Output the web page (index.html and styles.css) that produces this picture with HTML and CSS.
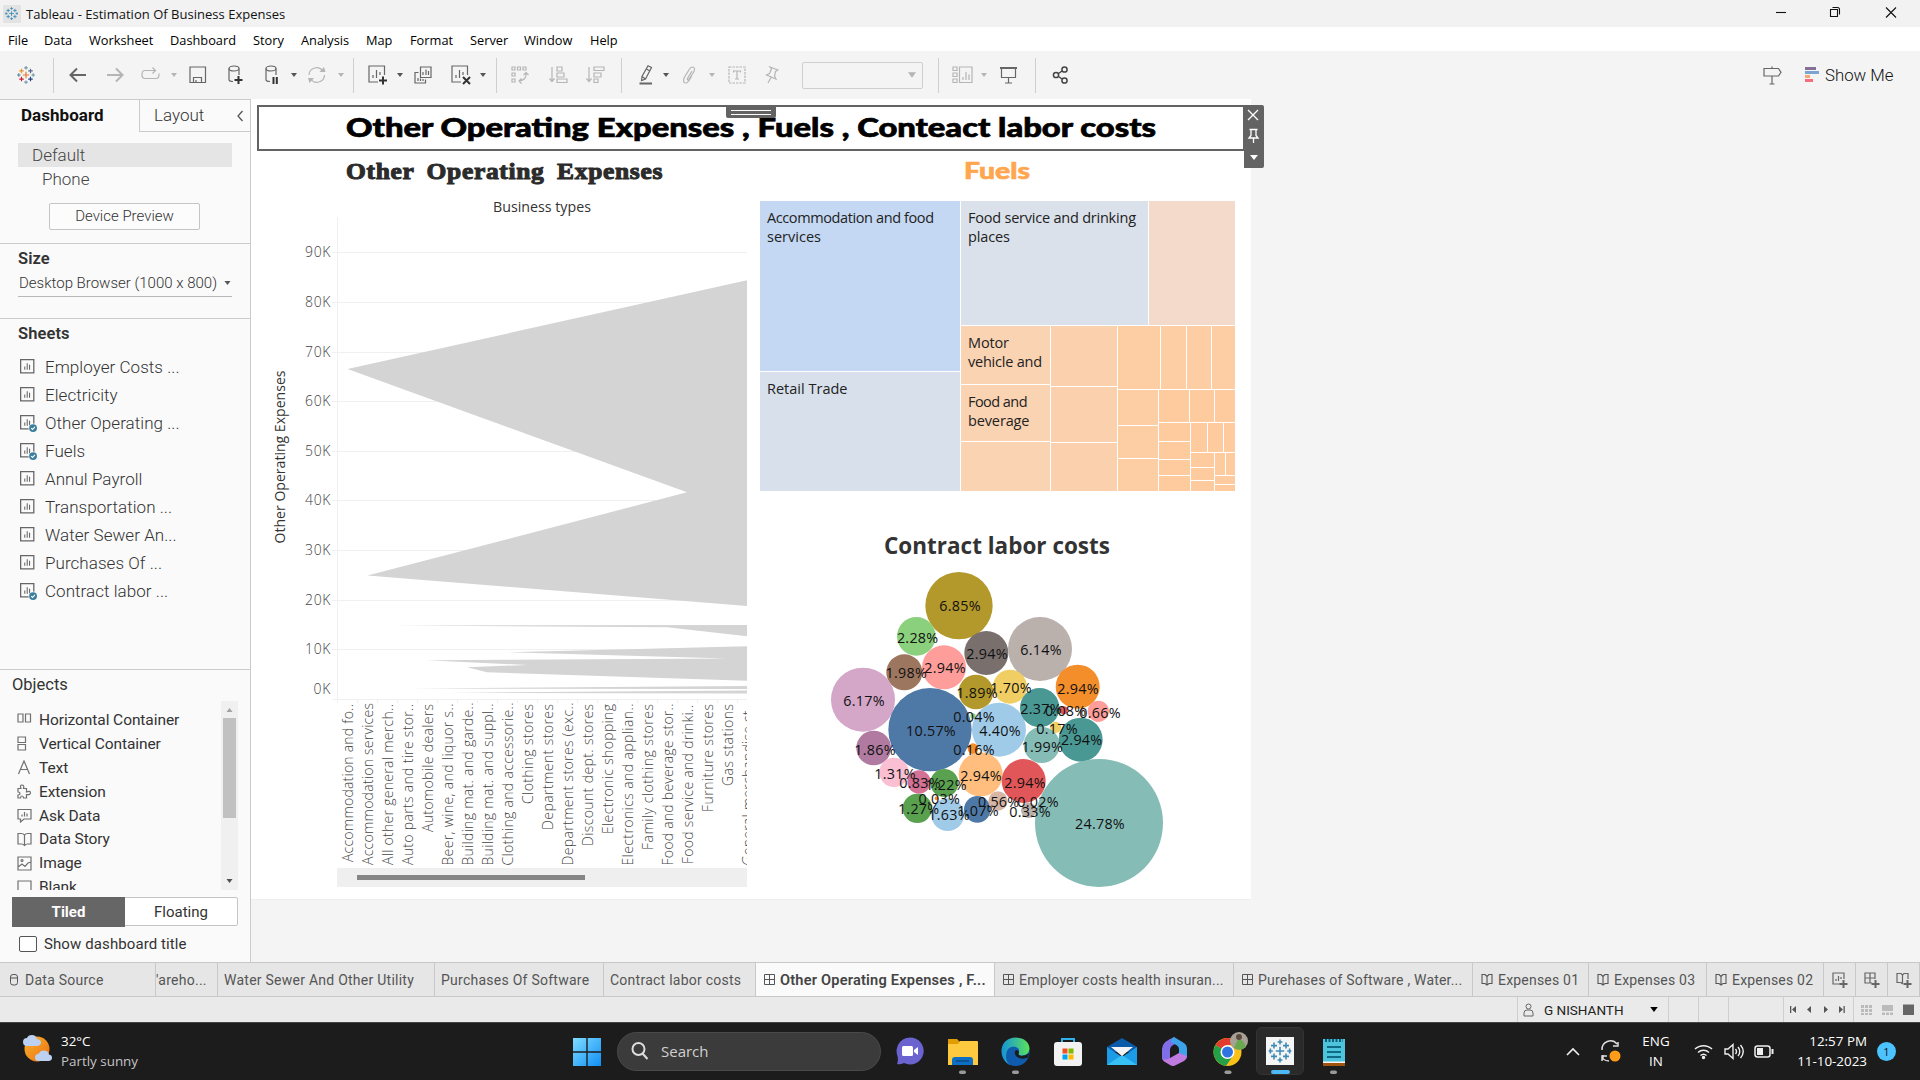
FILE: index.html
```html
<!DOCTYPE html>
<html lang="en">
<head>
<meta charset="utf-8">
<title>Tableau - Estimation Of Business Expenses</title>
<link rel="stylesheet" href="styles.css">
</head>
<body>
<svg class="defs" aria-hidden="true">
  <symbol id="caret" viewBox="0 0 6 4"><path d="M0 0h6L3 4z" fill="currentColor"/></symbol>
  <symbol id="mark" viewBox="0 0 20 20">
    <g fill="none" stroke-width="1.3">
      <path d="M10 6.5v7M6.5 10h7" stroke="#e8762d"/>
      <path d="M5 3v5M2.5 5.5h5" stroke="#eb912c"/><path d="M15 3v5M12.500 5.500h5" stroke="#5c6692"/>
      <path d="M5 12v5M2.500 14.500h5" stroke="#c72035"/><path d="M15 12v5M12.500 14.500h5" stroke="#1f447e"/>
      <path d="M10 0v4M8 2h4" stroke="#7099a6"/><path d="M10 16v4M8 18h4" stroke="#7b9bb5"/>
      <path d="M2 8v4M0 10h4" stroke="#59879b"/><path d="M18 8v4M16 10h4" stroke="#7099a6"/>
    </g>
  </symbol>
  <symbol id="mark-blue" viewBox="0 0 20 20">
    <path d="M10 6.500v7M6.500 10h7M5 3v5M2.500 5.500h5M15 3v5M12.500 5.500h5M5 12v5M2.500 14.500h5M15 12v5M12.500 14.500h5M10 .5v4M8 2.500h4M10 15.500v4M8 17.500h4M2 8v4M.5 10h3.500M18 8v4M16 10h3.500" fill="none" stroke="#3f8bb5" stroke-width="1.300"/>
  </symbol>
  <symbol id="sheet" viewBox="0 0 16 16">
    <path d="M.6.600h12.400v12.400H.6z" fill="none" stroke="#666" stroke-width="1.200"/><path d="M4.500 10V7M6.800 10V4M9 10V5.500" stroke="#666" fill="none"/>
  </symbol>
  <symbol id="used" viewBox="0 0 16 16">
    <path d="M.6.600h12.400v12.400H.6z" fill="none" stroke="#666" stroke-width="1.200"/><path d="M4.500 10V7M6.800 10V4M9 10V5.500" stroke="#666" fill="none"/>
    <circle cx="12.300" cy="12.300" r="4.300" fill="#fafafa"/><circle cx="12.300" cy="12.300" r="3.700" fill="#3b7f9f"/><path d="M10.500 12.300l1.300 1.300 2.300-2.500" fill="none" stroke="#fff"/>
  </symbol>
  <symbol id="dash" viewBox="0 0 11 11"><path d="M.5.500h10v10H.5zM5.500.500v10M.5 5.500h10" fill="none" stroke="#555"/></symbol>
  <symbol id="story" viewBox="0 0 12 13"><path d="M6 3.500L4 1.500H1v9h3L6 12l2-1.500h3v-9H8zV12" fill="none" stroke="#555" stroke-width="1.100"/></symbol>
</svg>

<header class="titlebar">
  <svg width="18" height="18" viewBox="0 0 20 20"><rect width="20" height="20" fill="#e3e3e3"/><use href="#mark-blue" x="2" y="2" width="15" height="15"/></svg>
  <span class="app-name">Tableau - Estimation Of Business Expenses</span>
  <svg class="win-controls" width="140" height="27" viewBox="1770 0 140 27" fill="none" stroke="#111" stroke-width="1.100"><path d="M1776 12.500h10"/><path d="M1830.500 9.500h7v7h-7zM1832.500 7.500h5q2 0 2 2v5"/><path d="M1886 7.500l10 10M1896 7.500l-10 10"/></svg>
</header>

<nav class="menubar"><span>File</span><span>Data</span><span>Worksheet</span><span>Dashboard</span><span>Story</span><span>Analysis</span><span>Map</span><span>Format</span><span>Server</span><span>Window</span><span>Help</span></nav>

<div class="toolbar">
  <svg width="18" height="18"><use href="#mark"/></svg>
  <i class="sep"></i>
  <svg width="18" height="16" viewBox="0 0 18 16" class="ic bold"><path d="M17 8H1.500M8 1.500L1.500 8 8 14.500"/></svg>
  <svg width="18" height="16" viewBox="0 0 18 16" class="ic bold off"><path d="M1 8h15.500M10 1.500L16.500 8 10 14.500"/></svg>
  <svg width="20" height="16" viewBox="0 0 20 16" class="ic off"><path d="M14 3.500H4q-3 0-3 4t3 4h11q3 0 3-4v-1M11.500.500l3 3-3 3"/></svg>
  <svg class="caret off" width="6" height="4"><use href="#caret"/></svg>
  <svg width="18" height="18" viewBox="0 0 18 18" class="ic"><path d="M1 1h15.500v15.500H1zM4.500 16.500v-5h8v5M7 14v2.500"/></svg>
  <svg width="18" height="20" viewBox="0 0 18 20" class="ic"><ellipse cx="7" cy="3.500" rx="5" ry="2.500"/><path d="M2 3.500v11q0 2 4 2M12 3.500V10"/><path d="M11.500 11v8M7.500 15h8" stroke="#333" stroke-width="2"/></svg>
  <svg width="18" height="20" viewBox="0 0 18 20" class="ic"><ellipse cx="7" cy="3.500" rx="5" ry="2.500"/><path d="M2 3.500v11q0 2 4 2M12 3.500V10"/><path d="M9.500 12v7M12.800 12v7" stroke="#333" stroke-width="2"/></svg>
  <svg class="caret" width="6" height="4"><use href="#caret"/></svg>
  <svg width="20" height="18" viewBox="0 0 20 18" class="ic off"><path d="M2 9a7.500 7.500 0 0 1 14-3.500M17.500 9a7.500 7.500 0 0 1-14 3.500"/><path d="M12.500 6h6l-1.500-5zM7 12H1l1.500 5z" fill="#b5b5b5" stroke="none"/></svg>
  <svg class="caret off" width="6" height="4"><use href="#caret"/></svg>
  <i class="sep"></i>
  <svg width="20" height="20" viewBox="0 0 20 20" class="ic"><path d="M10 17H1V1h15.500v9M5 13v-3M8.500 13V5M12 10V7"/><path d="M15 11.500v8M11 15.500h8" stroke="#333" stroke-width="2"/></svg>
  <svg class="caret" width="6" height="4"><use href="#caret"/></svg>
  <svg width="18" height="18" viewBox="0 0 18 18" class="ic"><path d="M6.500 1H17v10.500H6.500zM9 9V6M12 9V3.500M14.500 9V5M4.500 6.500H1V17h10.500v-3.500M4 15v-3M6.500 15v-2.500M9 15v-2"/></svg>
  <svg width="20" height="20" viewBox="0 0 20 20" class="ic"><path d="M10 17H1V1h15.500v9M5 13v-3M8.500 13V5M12 10V7"/><path d="M12 12l7 7M19 12l-7 7" stroke="#333" stroke-width="2"/></svg>
  <svg class="caret" width="6" height="4"><use href="#caret"/></svg>
  <i class="sep"></i>
  <svg width="18" height="18" viewBox="0 0 18 18" class="ic off"><path d="M1 1h3v3H1zM6.500 1h3v3h-3zM12 1h3v3h-3zM1 7h3v3H1zM1 13h3v3H1zM15 7q1 7-7 8M12.500 9L15 6.500 17.500 9M10.500 12.500L8 15l2.500 2.500"/></svg>
  <svg width="19" height="18" viewBox="0 0 19 18" class="ic off"><path d="M3 1v14M.5 12.500L3 15.500l2.500-3M8 1h5v4H8zM8 7h7v4H8zM8 13h10v3.500H8z"/></svg>
  <svg width="19" height="18" viewBox="0 0 19 18" class="ic off"><path d="M3 1v14M.5 12.500L3 15.500l2.500-3M8 1h10v3.500H8zM8 7h7v4H8zM8 13h4v3.500H8z"/></svg>
  <i class="sep"></i>
  <svg width="16" height="20" viewBox="0 0 16 20" class="ic"><path d="M10 .8l3.500 1.700L7.500 14 3.500 15.500 4 11.500zM4 11.500L7.500 14M8.500 4L12 6"/><path d="M1.500 18.500H14" stroke-width="2"/></svg>
  <svg class="caret" width="6" height="4"><use href="#caret"/></svg>
  <svg width="16" height="18" viewBox="0 0 16 18" class="ic off"><path d="M10 5L5.500 12.500q-.5 2 1 1.500L12 5.500Q13.500 1 10.500 1 9 1 7.500 3L2 12q-1.500 5 2 5 1.500 0 3-2.500l2.500-4"/></svg>
  <svg class="caret off" width="6" height="4"><use href="#caret"/></svg>
  <svg width="18" height="18" viewBox="0 0 18 18" class="ic off"><path d="M1 1h16v16H1z" stroke-dasharray="2.500 1"/><path d="M5.500 6.500V5h7v1.500M9 5v8M7 13h4"/></svg>
  <svg width="14" height="18" viewBox="0 0 14 18" class="ic off"><path d="M5 1l8 3-2.500 1.500-1 4.500 1.500 3-9.500-4 3-1.500 2-4.500zM6 11.500L3 17"/></svg>
  <span class="select"><svg class="caret off" width="8" height="6"><use href="#caret"/></svg></span>
  <i class="sep"></i>
  <svg width="21" height="18" viewBox="0 0 21 18" class="ic off"><path d="M1 1h4v3.500H1zM1 7h4v3.500H1zM1 13h4v3.500H1zM7.500 1H20v15.500H7.500zM11 14v-3M14 14V6M17 14V8.500"/></svg>
  <svg class="caret off" width="6" height="4"><use href="#caret"/></svg>
  <svg width="19" height="18" viewBox="0 0 19 18" class="ic"><path d="M1 2h17" stroke-width="2"/><path d="M2.500 2v9.500h14V2M9.500 11.500V17M6 17h7"/></svg>
  <i class="sep"></i>
  <svg width="17" height="18" viewBox="0 0 17 18" class="ic dark"><circle cx="4" cy="9" r="2.600"/><circle cx="12.500" cy="3.500" r="2.600"/><circle cx="12.500" cy="14.500" r="2.600"/><path d="M6.500 7.500L10 5M6.500 10.500L10 13"/></svg>
  <svg width="19" height="19" viewBox="0 0 19 19" class="ic"><path d="M9 .5v2M9 10v8M6.500 18h5M1 2.500h14.500L18 6.300 15.500 10H1z"/></svg>
  <svg width="15" height="16" viewBox="0 0 15 16"><path d="M1 0h11v3H1z" fill="#86709a"/><path d="M1 4h14v3H1z" fill="#7ba4d0"/><path d="M1 8h5v3H1z" fill="#f5a77a"/><path d="M1 12h8v3H1z" fill="#f76d7d"/></svg>
  <span class="showme">Show Me</span>
</div>

<main class="workspace">
  <aside class="sidebar">
    <div class="side-tabs"><b>Dashboard</b><span>Layout<svg width="8" height="12" viewBox="0 0 8 12" fill="none" stroke="#555" stroke-width="1.300"><path d="M6.500 1L2 6l4.500 5"/></svg></span></div>
    <section class="devices">
      <div class="device on">Default</div>
      <div class="device phone">Phone</div>
      <div class="preview">Device Preview</div>
    </section>
    <section class="size">
      <h2>Size</h2>
      <div class="size-pick"><span>Desktop Browser (1000 x 800)</span><svg class="caret" width="7" height="4"><use href="#caret"/></svg></div>
    </section>
    <section class="sheets">
      <h2>Sheets</h2>
      <ul>
        <li><svg><use href="#sheet"/></svg>Employer Costs ...</li>
        <li><svg><use href="#sheet"/></svg>Electricity</li>
        <li><svg><use href="#used"/></svg>Other Operating ...</li>
        <li><svg><use href="#used"/></svg>Fuels</li>
        <li><svg><use href="#sheet"/></svg>Annul Payroll</li>
        <li><svg><use href="#sheet"/></svg>Transportation ...</li>
        <li><svg><use href="#sheet"/></svg>Water Sewer An...</li>
        <li><svg><use href="#sheet"/></svg>Purchases Of ...</li>
        <li><svg><use href="#used"/></svg>Contract labor ...</li>
      </ul>
    </section>
    <section class="objects">
      <h3>Objects</h3>
      <div class="scroller">
        <ul>
          <li><svg viewBox="0 0 15 15"><path d="M1 2h5v8H1zM8.500 2h5v8h-5z"/></svg>Horizontal Container</li>
          <li><svg viewBox="0 0 15 15"><path d="M1 1h7.500v5.500H1zM1 8.500h7.500V14H1z"/></svg>Vertical Container</li>
          <li><svg viewBox="0 0 15 15"><path d="M1.500 14L7 1l5.500 13M3.700 9.500h6.600"/></svg>Text</li>
          <li><svg viewBox="0 0 15 15"><path d="M1 4.500h3Q2.500 1 5 1t1.500 3.500h3V8q4-1.500 4 .8T9.500 10.500V14H6.500q0-2-1.500-2t-1.500 2H1v-3q2 0 2-1.500T1 8z"/></svg>Extension</li>
          <li><svg viewBox="0 0 15 15"><path d="M1 1.500h13V11H7l-3.500 3V11H1zM5 8.500v-2M7.500 8.500V4M10 8.500V5.500"/></svg>Ask Data</li>
          <li><svg viewBox="0 0 15 15"><path d="M7.500 3Q6 1.500 4.500 1.500H1V12h3.500q1.500 0 3 1.500 1.500-1.500 3-1.500H14V1.500h-3.500Q9 1.500 7.500 3zV13.500"/></svg>Data Story</li>
          <li><svg viewBox="0 0 15 15"><path d="M1 1h13v13H1zM1 11l4-3 3 2.500L11 7l3-1"/><circle cx="5" cy="4.500" r="1"/></svg>Image</li>
          <li><svg viewBox="0 0 15 15"><path d="M1 1h13v13H1z"/></svg>Blank</li>
        </ul>
        <div class="scrollbar"><svg class="up" width="7" height="4"><use href="#caret"/></svg><i></i><svg class="down" width="7" height="4"><use href="#caret"/></svg></div>
      </div>
      <div class="mode"><b>Tiled</b><span>Floating</span></div>
      <label class="show-title"><i></i>Show dashboard title</label>
    </section>
  </aside>

  <div class="stage">
    <div class="dashboard">
      <div class="dash-title">
        <svg width="982" height="42" viewBox="259 107 982 42"><text x="346" y="137" textLength="810" lengthAdjust="spacingAndGlyphs" class="t-main">Other Operating Expenses , Fuels , Conteact labor costs</text></svg>
        <div class="handle"></div>
        <svg class="tools" width="21" height="63" viewBox="0 0 21 63"><path d="M0 0h19q2 0 2 2v59q0 2-2 2H1V46H0z" fill="#636363"/><path d="M5 5l10 10M15 5L5 15M6.500 24.500h8M8 24.500v6l-2 2.500h9l-2-2.500v-6M10.500 33v5" fill="none" stroke="#fff" stroke-width="1.300"/><path d="M7 50h8l-4 5z" fill="#fff"/></svg>
      </div>
      <div class="columns">
        <svg width="502" height="742" viewBox="251 151 502 742">
          <text x="346" y="179" textLength="317" lengthAdjust="spacingAndGlyphs" class="t-serif">Other Operating Expenses</text>
          <g class="ink"><text x="493" y="212" textLength="98" lengthAdjust="spacingAndGlyphs">Business types</text>
          <text transform="translate(285 543.500) rotate(-90)" textLength="173" lengthAdjust="spacingAndGlyphs">Other Operating Expenses</text></g>
          <path d="M337.500 217v482M332 252.500h415M332 302.500h415M332 352.500h415M332 401.500h415M332 451.500h415M332 500.500h415M332 550.500h415M332 600.500h415M332 649.500h415M332 699.500h415M337.500 699v4M357.500 699v4M377.500 699v4M397.500 699v4M417.500 699v4M437.500 699v4M457.500 699v4M477.500 699v4M497.500 699v4M517.500 699v4M537.500 699v4M557.500 699v4M577.500 699v4M597.500 699v4M617.500 699v4M637.500 699v4M657.500 699v4M677.500 699v4M697.500 699v4M717.500 699v4M737.500 699v4" stroke="#f0f0f0" fill="none"/>
          <g fill="#d4d4d4">
            <path d="M347.500 369L747 280.200V606L367.500 575.500 687 492.300z"/>
            <path d="M391 625.500L747 625v11.200L667 627.200z"/>
            <path d="M508 652.300L747 646.200v34.500L487 672.200l-20-5 60-2.200-100-4.800L727 658.600z"/>
            <path d="M410 688.600L747 686v3zM450 692.800L747 690.500v3z"/>
          </g>
          <g class="axis">
            <text x="305" y="257" textLength="25.500">90K</text><text x="305" y="307" textLength="25.500">80K</text><text x="305" y="357" textLength="25.500">70K</text><text x="305" y="406" textLength="25.500">60K</text><text x="305" y="456" textLength="25.500">50K</text><text x="305" y="505" textLength="25.500">40K</text><text x="305" y="555" textLength="25.500">30K</text><text x="305" y="605" textLength="25.500">20K</text><text x="305" y="654" textLength="25.500">10K</text><text x="313.500" y="694" textLength="17">0K</text>
          </g>
          <svg x="337" y="700" width="410" height="168" viewBox="337 700 410 168" class="axis">
            <g transform="translate(352.500 862) rotate(-90)"><text textLength="158">Accommodation and fo..</text></g>
            <g transform="translate(372.500 865) rotate(-90)"><text textLength="162">Accommodation services</text></g>
            <g transform="translate(392.500 865) rotate(-90)"><text textLength="161">All other general merch..</text></g>
            <g transform="translate(412.500 865) rotate(-90)"><text textLength="161">Auto parts and tire stor..</text></g>
            <g transform="translate(432.500 832) rotate(-90)"><text textLength="128">Automobile dealers</text></g>
            <g transform="translate(452.500 865.500) rotate(-90)"><text textLength="162">Beer, wine, and liquor s..</text></g>
            <g transform="translate(472.500 865.500) rotate(-90)"><text textLength="163">Building mat. and garde..</text></g>
            <g transform="translate(492.500 865.500) rotate(-90)"><text textLength="162">Building mat. and suppl..</text></g>
            <g transform="translate(512.500 865.500) rotate(-90)"><text textLength="163">Clothing and accessorie..</text></g>
            <g transform="translate(532.500 804) rotate(-90)"><text textLength="100">Clothing stores</text></g>
            <g transform="translate(552.500 830) rotate(-90)"><text textLength="126">Department stores</text></g>
            <g transform="translate(572.500 865.500) rotate(-90)"><text textLength="163">Department stores (exc..</text></g>
            <g transform="translate(592.500 846) rotate(-90)"><text textLength="142">Discount dept. stores</text></g>
            <g transform="translate(612.500 834) rotate(-90)"><text textLength="130">Electronic shopping</text></g>
            <g transform="translate(632.500 865.500) rotate(-90)"><text textLength="162">Electronics and applian..</text></g>
            <g transform="translate(652.500 850) rotate(-90)"><text textLength="146">Family clothing stores</text></g>
            <g transform="translate(672.500 865.500) rotate(-90)"><text textLength="162">Food and beverage stor..</text></g>
            <g transform="translate(692.500 864) rotate(-90)"><text textLength="159">Food service and drinki..</text></g>
            <g transform="translate(712.500 812) rotate(-90)"><text textLength="108">Furniture stores</text></g>
            <g transform="translate(732.500 786) rotate(-90)"><text textLength="82">Gas stations</text></g>
            <g transform="translate(752.500 865.500) rotate(-90)"><text textLength="162">General merchandise st..</text></g>
          </svg>
          <path d="M337 868h410v19H337z" fill="#efefef"/><path d="M357 875h228v5H357z" fill="#858585"/>
        </svg>
        <div class="right-col">
          <svg width="498" height="350" viewBox="753 151 498 350">
            <text x="964" y="179" textLength="66" lengthAdjust="spacingAndGlyphs" class="t-fuels">Fuels</text>
            <path fill="#c4d8f3" d="M760 201h200v170H760z"/><path fill="#d8e0eb" d="M760 372h200v119H760z"/><path fill="#dae1ea" d="M961 201h187v124H961z"/><path fill="#f3dacb" d="M1149 201h86v124h-86z"/>
            <path fill="#fad3b3" d="M961 326h89v58h-89zM961 385h89v56h-89zM961 442h89v49h-89z"/>
            <path fill="#fbd0ac" d="M1051 326h66v60h-66zM1051 387h66v55h-66zM1051 443h66v48h-66z"/>
            <path fill="#fdcda4" d="M1118 326h42v63h-42zM1161 326h25v63h-25zM1187 326h24v63h-24zM1212 326h23v63h-23zM1118 390h40v35h-40zM1118 426h40v32h-40zM1118 459h40v32h-40z"/>
            <path fill="#fecb9e" d="M1159 390h30v32h-30zM1190 390h24v32h-24zM1215 390h20v32h-20zM1159 423h31v18h-31zM1159 442h31v17h-31zM1159 460h31v15h-31zM1159 476h31v15h-31zM1191 423h16v29h-16zM1208 423h15v29h-15zM1224 423h11v29h-11zM1191 453h23v14h-23zM1191 468h23v12h-23zM1191 481h23v10h-23zM1215 453h10v22h-10zM1226 453h9v22h-9zM1215 476h20v8h-20zM1215 485h20v6h-20z"/>
            <g class="tree">
              <text x="767" y="223" textLength="167">Accommodation and food</text><text x="767" y="242" textLength="54">services</text>
              <text x="767" y="394" textLength="80.500">Retail Trade</text>
              <text x="968" y="223" textLength="168">Food service and drinking</text><text x="968" y="242" textLength="42">places</text>
              <text x="968" y="348" textLength="41">Motor</text><text x="968" y="367" textLength="74">vehicle and</text>
              <text x="968" y="407" textLength="59.500">Food and</text><text x="968" y="426" textLength="61.500">beverage</text>
            </g>
          </svg>
          <svg width="498" height="392" viewBox="753 501 498 392">
            <text x="884" y="553.500" textLength="226" lengthAdjust="spacingAndGlyphs" class="t-contract">Contract labor costs</text>
            <g transform="translate(800 520) scale(.33333)">
              <circle cx="477" cy="257" r="101" fill="#b3982b"/><circle cx="349" cy="349" r="58" fill="#8bd17d"/><circle cx="559" cy="399" r="66" fill="#79706e"/><circle cx="720" cy="387" r="96" fill="#bab0ac"/><circle cx="313" cy="457" r="54" fill="#9d7660"/><circle cx="432" cy="442" r="66" fill="#ff9d9a"/><circle cx="528" cy="516" r="52" fill="#b3982b"/><circle cx="630" cy="500" r="51" fill="#f1ce63"/><circle cx="833" cy="500" r="66" fill="#f48e2b"/><circle cx="189" cy="539" r="96" fill="#d4a6c8"/><circle cx="390" cy="629" r="125" fill="#4e79a7"/><circle cx="519" cy="588" r="8" fill="#8bd17d"/><circle cx="597" cy="629" r="81" fill="#a0cbe8"/><circle cx="719" cy="563" r="59" fill="#499894"/><circle cx="791" cy="571" r="12" fill="#e15759"/><circle cx="895" cy="574" r="32" fill="#ff9d9a"/><circle cx="767" cy="622" r="17" fill="#f1ce63"/><circle cx="725" cy="675" r="54" fill="#86bcb6"/><circle cx="842" cy="659" r="66" fill="#499894"/><circle cx="221" cy="684" r="52" fill="#b07aa1"/><circle cx="519" cy="686" r="16" fill="#f28e2b"/><circle cx="542" cy="763" r="66" fill="#ffbe7d"/><circle cx="282" cy="757" r="44" fill="#fabfd2"/><circle cx="357" cy="786" r="35" fill="#d37295"/><circle cx="433" cy="789" r="42" fill="#59a14f"/><circle cx="671" cy="783" r="66" fill="#e15759"/><circle cx="897" cy="909" r="192" fill="#86bcb6"/><circle cx="410" cy="835" r="6" fill="#f28e2b"/><circle cx="352" cy="865" r="44" fill="#59a14f"/><circle cx="443" cy="884" r="49" fill="#a0cbe8"/><circle cx="532" cy="868" r="40" fill="#4e79a7"/><circle cx="594" cy="843" r="29" fill="#d7b5a6"/><circle cx="686" cy="871" r="23" fill="#bab0ac"/>
              <g class="pct">
                <text x="480" y="274">6.85%</text><text x="353" y="370">2.28%</text><text x="561" y="418">2.94%</text><text x="723" y="406">6.14%</text><text x="319" y="475">1.98%</text><text x="435" y="460">2.94%</text><text x="531" y="535">1.89%</text><text x="633" y="519">1.70%</text><text x="834" y="523">2.94%</text><text x="192" y="559">6.17%</text><text x="393" y="649">10.57%</text><text x="522" y="606">0.04%</text><text x="600" y="649">4.40%</text><text x="723" y="583">2.37%</text><text x="797" y="589">0.08%</text><text x="900" y="595">0.66%</text><text x="771" y="643">0.17%</text><text x="727" y="697">1.99%</text><text x="845" y="676">2.94%</text><text x="225" y="704">1.86%</text><text x="522" y="706">0.16%</text><text x="543" y="784">2.94%</text><text x="285" y="778">1.31%</text><text x="360" y="805">0.83%</text><text x="438" y="811">1.22%</text><text x="675" y="805">2.94%</text><text x="900" y="928">24.78%</text><text x="418" y="852">0.03%</text><text x="356" y="883">1.27%</text><text x="447" y="901">1.63%</text><text x="534" y="889">1.07%</text><text x="596" y="862">0.56%</text><text x="714" y="862">0.02%</text><text x="690" y="892">0.33%</text>
              </g>
            </g>
          </svg>
        </div>
      </div>
    </div>
  </div>
</main>

<div class="sheet-tabs">
  <span><svg width="9" height="12" viewBox="0 0 9 12" fill="none" stroke="#555"><rect x=".5" y=".5" width="7" height="10.500" rx="2.500"/><path d="M.5 4h7"/></svg><em class="ds">Data Source</em></span>
  <span class="cut"><em>'areho...</em></span>
  <span><em>Water Sewer And Other Utility</em></span>
  <span><em>Purchases Of Software</em></span>
  <span><em>Contract labor costs</em></span>
  <span class="active"><svg width="11" height="11"><use href="#dash"/></svg><em>Other Operating Expenses , F...</em></span>
  <span class="dt"><svg width="11" height="11"><use href="#dash"/></svg><em>Employer costs health insuran...</em></span>
  <span class="dt"><svg width="11" height="11"><use href="#dash"/></svg><em>Purehases of Software , Water...</em></span>
  <span class="dt"><svg width="12" height="13"><use href="#story"/></svg><em>Expenses 01</em></span>
  <span class="dt"><svg width="12" height="13"><use href="#story"/></svg><em>Expenses 03</em></span>
  <span class="dt"><svg width="12" height="13"><use href="#story"/></svg><em>Expenses 02</em></span>
  <span class="new"><svg width="16" height="16" viewBox="0 0 16 16" class="ic"><path d="M8 12H1V1h11v6M4 9V7M6.500 9V4M9 7V5"/><path d="M11.500 8v8M7.500 12h8" stroke-width="2"/></svg></span>
  <span class="new"><svg width="16" height="16" viewBox="0 0 16 16" class="ic"><path d="M8 11H1V1h10v6M6 1v10M1 6h10"/><path d="M11.500 8v8M7.500 12h8" stroke-width="2"/></svg></span>
  <span class="new"><svg width="16" height="16" viewBox="0 0 16 16" class="ic"><path d="M6.500 12L5 10.500H1v-9h4L6.500 3 8 1.500h4V7M6.500 3v9"/><path d="M11.500 8v8M7.500 12h8" stroke-width="2"/></svg></span>
</div>

<div class="statusbar">
  <span class="user"><svg width="11" height="14" viewBox="0 0 11 14" fill="none" stroke="#666"><circle cx="5.500" cy="3.500" r="2.500"/><path d="M1 13V10q0-3 3-3h3q3 0 3 3v3z"/></svg>G NISHANTH<svg class="drop" width="8" height="5"><use href="#caret"/></svg></span>
  <span></span><span></span><span></span>
  <span class="pager"><svg width="60" height="9" viewBox="0 0 60 9" fill="#555"><path d="M2 1h1.300v7H2zM8 1v7L4 4.500zM23 1v7l-4-3.500zM36 1v7l4-3.500zM51 1v7l4-3.500zM55.500 1h1.300v7h-1.300z"/></svg></span>
  <span class="views"><svg width="56" height="12" viewBox="0 0 56 12"><path fill="#bbb" d="M0 1h3v3H0zM4 1h3v3H4zM8 1h3v3H8zM0 5h3v3H0zM4 5h3v3H4zM8 5h3v3H8zM0 9h3v2H0zM4 9h3v2H4zM8 9h3v2H8zM21 1h11v6H21zM21 8.500h3V11h-3zM25 8.500h3V11h-3zM29 8.500h3V11h-3z"/><path fill="#666" d="M42 .500h11V11H42z"/></svg></span>
</div>

<footer class="taskbar">
  <svg width="32" height="58" viewBox="0 0 32 58"><defs><linearGradient id="sun" x2="1" y2="1"><stop stop-color="#f7b52e"/><stop offset="1" stop-color="#ee6e12"/></linearGradient></defs><circle cx="15" cy="27" r="12.500" fill="url(#sun)"/><path d="M5 24q-4 0-4-4t4-4q1-3 5-3t5 4q4 .5 4 3.500T15 24z" fill="#bcd0f2"/><path d="M17 39q-4 0-4-3.500t4-4q1-3 5-3t5 4q3 .5 3 3.200T27 39z" fill="#bcd0f2"/></svg>
  <div class="weather"><span>32°C</span><span>Partly sunny</span></div>
  <svg width="28" height="58" viewBox="0 0 28 58"><defs><linearGradient id="win" x2="1" y2="1"><stop stop-color="#7fdcff"/><stop offset="1" stop-color="#0f8ff5"/></linearGradient></defs><path fill="url(#win)" d="M0 16h13.300v13.300H0zM14.700 16H28v13.300H14.700zM0 30.700h13.300V44H0zM14.700 30.700H28V44H14.700z"/></svg>
  <div class="search"><svg width="18" height="20" viewBox="0 0 18 20" fill="none" stroke="#ddd" stroke-width="2"><circle cx="7.500" cy="8" r="6"/><path d="M11.500 12.500l5 5.500"/></svg>Search</div>
  <svg width="28" height="58" viewBox="0 0 28 58"><path d="M14 15.500A13.500 13.500 0 1 1 8 41q-4 2-7 1 1.500-3 .5-8A13.500 13.500 0 0 1 14 15.500z" fill="#6b63cf"/><rect x="6" y="24" width="11" height="10" rx="1.500" fill="#fff"/><path d="M18 28l4-3v8l-4-3z" fill="#fff"/></svg>
  <svg width="32" height="58" viewBox="0 0 32 58"><path d="M1 17h9l3 3-3 4H1z" fill="#e09c00"/><path d="M1 22h10l2-3h17q1 0 1 1v23H1z" fill="#fdc93f"/><path d="M5 43v-5q0-3 3-3h15q3 0 3 3v5z" fill="#0c6fc4"/><path d="M9 39h13" stroke="#084a87" stroke-width="1.500"/><rect x="12" y="48.500" width="7" height="3.500" rx="1.700" fill="#999"/></svg>
  <svg width="32" height="58" viewBox="0 0 32 58"><defs><linearGradient id="edge" x2="1"><stop stop-color="#1593d8"/><stop offset="1" stop-color="#5be35b"/></linearGradient></defs><circle cx="15.500" cy="30" r="14" fill="#0f5cae"/><path d="M1.500 28Q3 16 16 15.500 29 16.500 29.500 27q-1 6.500-8 6.500-4-.5-2.500-3 1-5-5-6-8 0-8 10 0 5 4 9Q1.500 38 1.500 28z" fill="url(#edge)"/><path d="M19 30.500q-2 3 3 3.500 4 0 7-3-.5 3-1 4.500-6 2.500-11-.5-4-4-1-7 3 .5 3 2.500z" fill="#1c1c1c"/><rect x="12" y="48.500" width="7" height="3.500" rx="1.700" fill="#999"/></svg>
  <svg width="28" height="58" viewBox="0 0 28 58"><path d="M8 21v-4h12v4" fill="none" stroke="#2fb2ec" stroke-width="2"/><rect y="20" width="28" height="24" rx="3" fill="#f2f2f2"/><path fill="#f25022" d="M8.500 26.500h5v5h-5z"/><path fill="#7fba00" d="M14.500 26.500h5v5h-5z"/><path fill="#00a4ef" d="M8.500 32.500h5v5h-5z"/><path fill="#ffb900" d="M14.500 32.500h5v5h-5z"/></svg>
  <svg width="30" height="58" viewBox="0 0 30 58"><path d="M0 25l15-9 15 9v5H0z" fill="#0a5ba8"/><path d="M0 25l15 10 15-10v18H0z" fill="#1c9be6"/><path d="M0 43l15-10 15 10z" fill="#38c0f5"/><path d="M4 25h22l-11 9z" fill="#f4f4f4"/></svg>
  <svg width="28" height="58" viewBox="0 0 28 58"><path d="M15 15Q2 19 2 27v10l8 5V28q0-4 5-6z" fill="#7f6ee8"/><path d="M14 15l10 6q3 2 3 6v9l-8-4v-5q0-2-2-3.500L11 20q0-4 3-5z" fill="#3da3e8"/><path d="M2 36q2 3 8 0l9-5 8 3q0 3-3 5l-8 4q-3 2-6 0l-5-3q-2-1-3-4z" fill="#c07be0"/></svg>
  <svg class="chrome" width="38" height="58" viewBox="0 0 38 58"><circle cx="15.500" cy="30" r="14" fill="#fbc116"/><path d="M15.500 30L3.400 23A14 14 0 0 1 27.600 23H15.500z" fill="#e33b2e"/><path d="M3.400 23A14 14 0 0 0 14 43.900L21.500 33 15.500 30z" fill="#24a148"/><circle cx="15.500" cy="30" r="7" fill="#fff"/><circle cx="15.500" cy="30" r="5.500" fill="#2f74e0"/><circle cx="27" cy="19" r="9" fill="#a7a196"/><path d="M22 26l4-9 5 2 3 6q-6 5-12 1z" fill="#6aa84f"/><circle cx="27" cy="15" r="3" fill="#5a4a40"/><rect x="12.500" y="48.500" width="7" height="3.500" rx="1.700" fill="#999"/></svg>
  <svg width="48" height="58" viewBox="0 0 48 58"><rect x=".5" y="5.500" width="47" height="47" rx="5" fill="#2a2a2a" stroke="#333"/><path d="M10 15h28v28H10z" fill="#f5f5f5"/><use href="#mark-blue" x="12" y="17" width="24" height="24"/><rect x="15" y="48" width="19" height="4" rx="2" fill="#4cb8f5"/></svg>
  <svg width="24" height="58" viewBox="0 0 24 58"><path d="M1 17h22v26H1z" fill="#4ec4dc"/><path d="M1 41h22v3H1z" fill="#a1520f"/><path d="M1 39.500h22V41H1z" fill="#f4f4f4"/><path d="M3 18.500h18" stroke="#0f5f78" stroke-width="3" stroke-dasharray="2 1.500"/><path d="M5 25h14M5 30h14M5 35h14" stroke="#0e6b85" stroke-width="2"/><rect x="8" y="48.500" width="7" height="3.500" rx="1.700" fill="#999"/></svg>
  <svg width="14" height="58" viewBox="0 0 14 58"><path d="M1 33l6-6 6 6" fill="none" stroke="#eee" stroke-width="1.600"/></svg>
  <svg width="24" height="58" viewBox="0 0 24 58"><path d="M2 28a8.500 8.500 0 0 1 15-6M18 20v4h-5M3 37v-4M3 37q3 2 6 2M2 39v-5h5" fill="none" stroke="#ddd" stroke-width="1.500"/><circle cx="15" cy="34" r="5.500" fill="#ff9c1a"/></svg>
  <div class="lang"><span>ENG</span><span>IN</span></div>
  <svg width="20" height="58" viewBox="0 0 20 58" fill="none" stroke="#eee" stroke-width="1.500"><path d="M1 27a12.500 12.500 0 0 1 17 0M4 30.500a8 8 0 0 1 11 0M6.500 33.500a4.500 4.500 0 0 1 6 0"/><circle cx="9.500" cy="35.500" r="1" fill="#eee"/></svg>
  <svg width="22" height="58" viewBox="0 0 22 58" fill="none" stroke="#eee" stroke-width="1.400"><path d="M1 27h3l5-4.500v14L4 32H1zM11.500 27q2 2.500 0 5M14 25q3.500 4.500 0 9M16.500 23q5.500 6.500 0 13"/></svg>
  <svg width="20" height="58" viewBox="0 0 20 58"><rect x="1" y="24" width="15" height="11" rx="2.500" fill="none" stroke="#eee" stroke-width="1.500"/><path d="M3 26h6v7H3zM17.500 27h2v5h-2z" fill="#eee"/></svg>
  <div class="clock"><span>12:57 PM</span><span>11-10-2023</span></div>
  <div class="badge">1</div>
</footer>
</body>
</html>
```
FILE: styles.css
```css
* { box-sizing: border-box; }
body { margin: 0; width: 1920px; height: 1080px; overflow: hidden; background: #f4f4f4; display: flex; flex-direction: column; font-family: Roboto, "Liberation Sans", sans-serif; color: #333; }
svg { display: block; flex: none; }
ul { list-style: none; margin: 0; padding: 0; }
h2, h3 { margin: 0; }
.defs { display: none; }

.titlebar { height: 27px; background: #f2f2f2; display: flex; align-items: center; padding-left: 3px; font: 13px/27px "Open Sans", sans-serif; color: #111; }
.app-name { margin-left: 5px; padding-top: 1px; letter-spacing: .02px; }
.win-controls { margin-left: auto; margin-right: 10px; }

.menubar { height: 24px; background: #fff; display: grid; grid-template-columns: 36px 45px 81px 83px 48px 65px 44px 60px 54px 66px auto; padding-left: 8px; font: 12.800px/27px "Open Sans", sans-serif; color: #000; white-space: nowrap; }

.toolbar { height: 48px; background: #f4f4f4; display: grid; align-items: center; justify-items: start; padding-left: 17px; color: #555;
  grid-template-columns: 36px 16px 37px 35px 30px 18px 38px 37px 27px 16px 31px 15px 15px 29px 17px 37px 29px 16px 15px 38px 37px 35px 17px 25px 19px 27px 19px 37px 37px 136px 14px 29px 18px 36px 17px 711px 41px 21px auto; }
.sep { width: 1px; height: 35px; background: #cfcfcf; }
.ic { fill: none; stroke: #666; stroke-width: 1.200; }
.ic.bold { stroke-width: 2; }
.ic.dark { stroke: #444; stroke-width: 1.500; }
.ic.off { stroke: #b5b5b5; }
.caret { color: #555; }
.caret.off { color: #b5b5b5; }
.select { width: 121px; height: 27px; border: 1px solid #cfcfcf; border-radius: 2px; display: flex; align-items: center; justify-content: flex-end; padding-right: 6px; }
.showme { font-size: 16.800px; color: #111; white-space: nowrap; font-weight: 300; }

.workspace { height: 863px; display: flex; }
.sidebar { width: 251px; background: #fafafa; border-right: 1px solid #cbcbcb; border-top: 1px solid #cbcbcb; display: flex; flex-direction: column; font-weight: 300; }
.side-tabs { display: grid; grid-template-columns: 139px 1fr; height: 31px; font-size: 17px; line-height: 31px; }
.side-tabs b { padding-left: 21px; color: #111; font-weight: 700; letter-spacing: .05px; }
.side-tabs span { border-left: 1px solid #cbcbcb; border-bottom: 1px solid #cbcbcb; padding: 0 6px 0 14px; display: flex; align-items: center; justify-content: space-between; }
.devices { height: 113px; padding: 12px 18px 0; font-size: 17px; border-bottom: 1px solid #cbcbcb; }
.device { height: 24px; line-height: 24px; padding-left: 14px; color: #444; }
.device.on { background: #e5e5e5; }
.device.phone { padding-left: 24px; }
.preview { width: 151px; height: 27px; margin: 12px 0 0 31px; border: 1px solid #c5c5c5; border-radius: 2px; background: #fcfcfc; text-align: center; font-size: 15px; line-height: 24px; }
.size { height: 75px; padding: 5px 18px 0; border-bottom: 1px solid #cbcbcb; }
h2 { font-size: 16.500px; font-weight: 600; line-height: 20px; letter-spacing: .1px; }
.size-pick { height: 28px; padding: 0 1px 0 1px; border-bottom: 1px solid #b8b8b8; display: flex; align-items: center; justify-content: space-between; font-size: 15px; line-height: 29px; padding-top: 1px; }
.sheets { padding: 5px 18px 0; height: 351px; border-bottom: 1px solid #cbcbcb; }
.sheets h2 { margin-bottom: 9px; }
.sheets li { height: 28px; display: flex; align-items: center; font-size: 17px; letter-spacing: .05px; white-space: nowrap; }
.sheets li svg { width: 17px; height: 17px; margin: 0 8px 0 2px; }
.objects { padding: 4px 12px 0; }
.objects h3 { font-size: 16.500px; font-weight: 400; line-height: 22px; }
.scroller { height: 189px; margin-top: 5px; display: flex; justify-content: space-between; overflow: hidden; }
.scroller ul { padding: 7px 0 0 5px; }
.scroller li { height: 23.900px; display: flex; align-items: center; gap: 7px; font-size: 15.500px; letter-spacing: -.08px; font-weight: 400; white-space: nowrap; }
.scroller li svg { width: 15px; height: 15px; fill: none; stroke: #707070; stroke-width: 1.200; }
.scrollbar { width: 17px; background: #f0f0f0; display: flex; flex-direction: column; align-items: center; }
.scrollbar i { width: 13px; height: 100px; background: #c1c1c1; margin-top: 6px; }
.scrollbar .up { transform: rotate(180deg); margin-top: 7px; color: #a3a3a3; }
.scrollbar .down { margin-top: auto; margin-bottom: 7px; color: #505050; }
.mode { display: grid; grid-template-columns: 1fr 1fr; height: 29px; margin-top: 7px; text-align: center; font-size: 15px; line-height: 28px; font-weight: 400; border: 1px solid #c5c5c5; border-radius: 2px; background: #fff; }
.mode b { background: #666; color: #fff; margin: -1px 0 -1px -1px; line-height: 30px; }
.show-title { display: flex; align-items: center; gap: 7px; height: 36px; padding-left: 7px; font-size: 15px; letter-spacing: .1px; font-weight: 400; }
.show-title i { width: 18px; height: 16px; border: 1px solid #555; border-radius: 2px; background: #fff; }

.stage { flex: 1; background: #f4f4f4; }
.dashboard { width: 1000px; height: 801px; background: #fff; border-bottom: 1px solid #eee; padding-top: 6px; }
.dash-title { position: relative; margin-left: 6px; width: 986px; height: 46px; border: 2px solid #636363; border-right: 0; }
.handle { position: absolute; left: 467px; top: -2px; width: 50px; height: 13px; background: #636363; border-radius: 0 0 2px 2px; }
.handle::after { content: ""; position: absolute; inset: 5px 5px 3px; border: solid #fff; border-width: 1px 0; }
.tools { position: absolute; left: 984px; top: -2px; }
.columns { display: flex; }
.t-main { font: 900 26.500px Lato, sans-serif; fill: #000; stroke: #000; stroke-width: .7; }
.t-serif { font: bold 23px "Liberation Serif", serif; fill: #2b2b2b; stroke: #2b2b2b; stroke-width: 1; word-spacing: 5px; letter-spacing: .6px; }
.t-fuels { font: 900 23px Lato, sans-serif; fill: #ffa64f; stroke: #ffa64f; stroke-width: .6; }
.t-contract { font: bold 24px "Open Sans", sans-serif; fill: #333; }
.ink { font: 14px "Open Sans", sans-serif; fill: #333; }
.axis { font: 300 14px "Open Sans", sans-serif; fill: #444; }
.tree { font: 14.500px "Open Sans", sans-serif; fill: #222; }
.pct { font: 43px "Open Sans", sans-serif; fill: #111; text-anchor: middle; letter-spacing: .8px; }

.sheet-tabs { height: 35px; border-top: 1px solid #c8c8c8; border-bottom: 1px solid #c8c8c8; display: grid; background: #e6e6e6; font-size: 14px; color: #555; letter-spacing: .25px;
  grid-template-columns: 156px 62px 217px 169px 152px 239px 239px 239px 116px 118px 117px 32px 32px 32px; }
.sheet-tabs span { display: flex; align-items: center; border-right: 1px solid #c8c8c8; padding-left: 6px; white-space: nowrap; overflow: hidden; }
.sheet-tabs em { font-style: normal; }
.sheet-tabs span:first-child { padding-left: 10px; }
.sheet-tabs .ds { margin-left: 6px; }
.sheet-tabs .cut { padding-left: 0; }
.sheet-tabs .active { background: #fafafa; font-weight: 600; font-size: 14.600px; color: #444; padding-left: 8px; gap: 5px; letter-spacing: .2px; }
.sheet-tabs .dt { padding-left: 8px; gap: 5px; letter-spacing: .2px; }
.sheet-tabs .new { padding-left: 8px; }

.statusbar { height: 25px; background: #eaeaea; display: grid; grid-template-columns: 151px 30px 30px 55px 70px 67px; justify-content: end; }
.statusbar span { border-left: 1px solid #cfcfcf; display: flex; align-items: center; }
.user { gap: 10px; font-size: 13.500px; color: #222; white-space: nowrap; }
.statusbar .user { padding-left: 5px; }
.drop { color: #000; margin-left: auto; margin-right: 10px; }
.pager { padding-left: 4px; }
.views { padding-left: 7px; }

.taskbar { height: 58px; background: #1c1c1c; box-shadow: inset 0 1px #444; display: grid; align-items: center; justify-items: start; padding-left: 22px; color: #fff; font: 13.400px/20px "Open Sans", sans-serif; white-space: nowrap;
  grid-template-columns: 39px 512px 44px 279px 51px 53px 54px 53px 53px 52px 44px 66px 244px 34px 40px 54px 30px 30px 33px 90px auto; }
.weather, .lang, .clock { display: grid; }
.weather span + span { color: #c4c4c4; }
.search { width: 264px; height: 39px; border-radius: 20px; background: #3b3b3b; border: 1px solid #4a4a4a; display: flex; align-items: center; padding-left: 13px; gap: 12px; font-size: 15px; color: #d0d0d0; }
.lang { width: 32px; text-align: center; }
.clock { width: 80px; text-align: right; }
.badge { width: 19px; height: 19px; border-radius: 50%; background: #4cc2ff; color: #111; font-size: 11px; line-height: 19px; text-align: center; }
```
